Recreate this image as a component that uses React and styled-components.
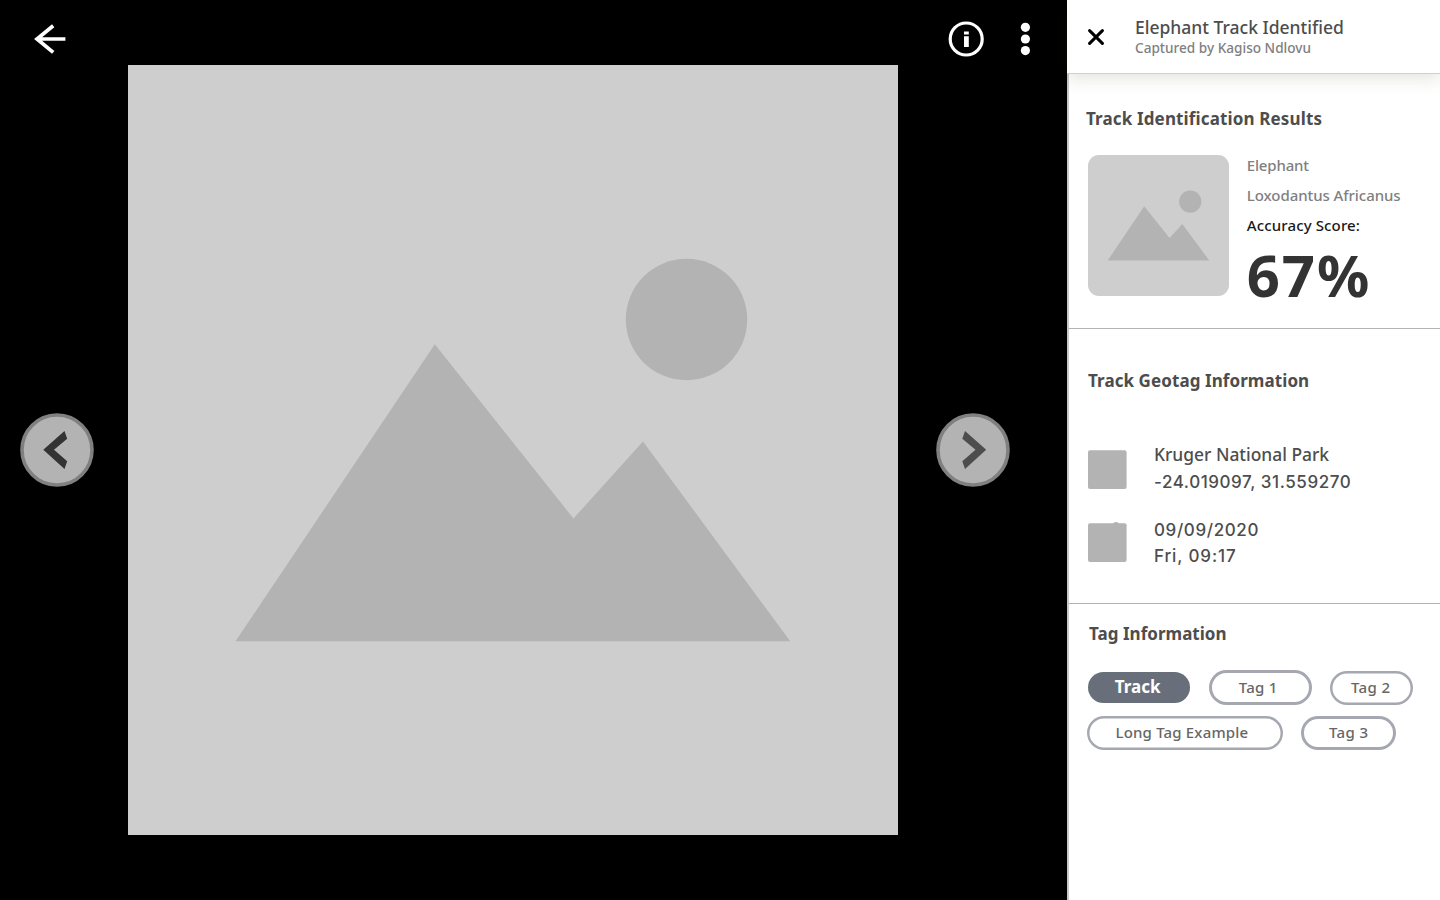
import React from 'react';
import styled, { createGlobalStyle } from 'styled-components';

const GlobalStyle = createGlobalStyle`
  *, *::before, *::after { box-sizing: border-box; }
  body { margin: 0; background: #000; font-family: "Noto Sans", "Open Sans", sans-serif; overflow: hidden; }
  button { padding: 0; border: 0; background: none; font: inherit; color: inherit; }
  svg { display: block; }
`;

const Page = styled.div`
  display: flex;
  width: 1440px;
  height: 900px;
`;

const Viewer = styled.main`
  display: flex;
  flex-direction: column;
  width: 1067px;
  background: #000;
`;

const Toolbar = styled.header`
  display: flex;
  align-items: center;
  height: 65px;
  padding: 14px 35px 0 34px;
`;

const IconButton = styled.button`
  flex: none;
  margin-left: ${(p) => p.$left || '0'};
`;

const Stage = styled.div`
  display: flex;
  align-items: center;
  height: 770px;
  padding-left: 20px;
`;

const Photo = styled.div`
  flex: none;
  width: 770px;
  height: 770px;
  margin: 0 38px 0 34px;
  background: #cecece;
`;

const NavButton = styled.button`
  flex: none;
  width: 74px;
  height: 74px;
`;

const Panel = styled.aside`
  display: flex;
  flex-direction: column;
  width: 373px;
  background: #fff;
`;

const PanelHeader = styled.header`
  position: relative;
  display: flex;
  height: 74px;
  padding: 17px 0 0 21px;
  background: #fff;
  border-bottom: 1px solid #d0d0d0;
  box-shadow: 0 4px 16px rgba(60, 50, 30, 0.14);
`;

const CloseButton = styled.button`
  width: 16px;
  height: 16px;
  margin: 12px 31px 0 0;
`;

const PanelBody = styled.div`
  flex: 1;
  border-left: 2px solid #c9c9c9;
`;

const Section = styled.section`
  height: ${(p) => p.$height};
  padding: ${(p) => p.$pad};
  border-bottom: ${(p) => (p.$last ? '0' : '1px solid #b3b3b3')};
`;

const Title = styled.h1`
  margin: 0;
  font-size: 17.5px;
  line-height: 20px;
  font-weight: 500;
  color: #4d4d4d;
  white-space: nowrap;
`;

const Subtitle = styled.p`
  margin: 0;
  font-size: 13.6px;
  line-height: 22px;
  font-weight: 500;
  color: #808080;
  white-space: nowrap;
`;

const Heading = styled.h2`
  margin: 0 0 0 ${(p) => p.$shift || '0'};
  font-size: 17px;
  line-height: 20px;
  font-weight: 700;
  letter-spacing: ${(p) => p.$tracking};
  color: #4d4d4d;
`;

const Result = styled.div`
  display: flex;
  gap: 18px;
  margin-top: 25.5px;
`;

const Thumb = styled.div`
  flex: none;
  width: 141px;
  height: 141px;
  margin-left: 1.8px;
  border-radius: 11px;
  overflow: hidden;
  background: #cecece;
`;

const Fact = styled.p`
  margin: 0;
  font-size: 15px;
  line-height: 30px;
  height: 30px;
  font-weight: 500;
  letter-spacing: ${(p) => p.$tracking};
  color: ${(p) => (p.$strong ? '#1a1a1a' : '#808080')};
  white-space: nowrap;
`;

const Facts = styled.div`
  margin-top: -5px;
`;

const Score = styled.p`
  margin: 0;
  font-size: 58px;
  line-height: 69px;
  font-weight: 700;
  letter-spacing: 1.9px;
  color: #333;
`;

const GeoRow = styled.div`
  display: flex;
  align-items: flex-start;
  gap: 27px;
  margin-top: ${(p) => p.$top};
`;

const GeoIcon = styled.svg`
  flex: none;
  margin-top: ${(p) => p.$top};
  fill: #b3b3b3;
`;

const GeoLine = styled.p`
  margin: 0;
  font-family: ${(p) => (p.$numeric ? '"Inter", sans-serif' : 'inherit')};
  font-size: ${(p) => (p.$numeric ? '17px' : '17.4px')};
  line-height: ${(p) => p.$line};
  font-weight: 500;
  letter-spacing: ${(p) => p.$tracking};
  color: #4d4d4d;
  white-space: nowrap;
`;

const TagRow = styled.div`
  display: flex;
  align-items: center;
  gap: 18px;
  height: 35px;
  margin-top: ${(p) => p.$top};
`;

const Tag = styled.span`
  flex: none;
  width: ${(p) => p.$width};
  height: ${(p) => p.$height};
  padding-left: ${(p) => p.$indent};
  margin-left: ${(p) => p.$shift || '0'};
  border-radius: 18px;
  font-size: ${(p) => (p.$active ? '17px' : '15px')};
  line-height: ${(p) => p.$line || p.$height};
  font-weight: ${(p) => (p.$active ? 700 : 500)};
  letter-spacing: ${(p) => p.$tracking};
  color: ${(p) => (p.$active ? '#fff' : '#666')};
  background: ${(p) => (p.$active ? '#696e7b' : '#fff')};
  box-shadow: ${(p) => (p.$active ? 'none' : `inset 0 0 0 ${p.$stroke} #a5a8b0`)};
  white-space: nowrap;
`;

const Landscape = ({ size }) => (
  <svg width={size} height={size} viewBox="0 0 770 770" fill="#b3b3b3">
    <path d="M107.5 576.3 306.8 279.3 445.5 453.5 515 376.5 662.3 576.3z" />
    <circle cx="558.5" cy="254.5" r="60.7" />
  </svg>
);

const Chevron = ({ flip }) => (
  <svg width="74" height="74" viewBox="0 0 74 74">
    <circle cx="37" cy="37" r="35" fill="#b3b3b3" stroke="#808080" strokeWidth="3.6" />
    <path
      d="M44.5 18 47.2 25.8 34 36.8 47.2 48.2 44.5 56 23.3 36.8z"
      fill={flip ? '#4d4d4d' : '#333'}
      transform={flip ? 'translate(73.5 0) scale(-1 1)' : undefined}
    />
  </svg>
);

export default function App() {
  return (
    <>
      <GlobalStyle />
      <Page>
        <Viewer>
          <Toolbar>
            <IconButton aria-label="Back">
              <svg width="34" height="34" viewBox="0 0 34 34" fill="none" stroke="#fff" strokeWidth="3.7">
                <path d="M19.2 2.8 3 16 19.2 29.4M3.5 16H31.4" />
              </svg>
            </IconButton>
            <IconButton $left="879px" aria-label="Information">
              <svg width="38" height="38" viewBox="0 0 38 38">
                <circle cx="19.2" cy="18" r="16" fill="none" stroke="#fff" strokeWidth="3.2" />
                <path d="M17 10.5h4.8v3H17zM17 15.2h4.8V26H17z" fill="#fff" />
              </svg>
            </IconButton>
            <IconButton $left="30px" aria-label="More">
              <svg width="18" height="38" viewBox="0 0 18 38" fill="#fff">
                <circle cx="10.4" cy="6.3" r="4.6" />
                <circle cx="10.4" cy="18" r="4.6" />
                <circle cx="10.4" cy="29.6" r="4.6" />
              </svg>
            </IconButton>
          </Toolbar>
          <Stage>
            <NavButton aria-label="Previous"><Chevron /></NavButton>
            <Photo><Landscape size={770} /></Photo>
            <NavButton aria-label="Next"><Chevron flip /></NavButton>
          </Stage>
        </Viewer>

        <Panel>
          <PanelHeader>
            <CloseButton aria-label="Close">
              <svg width="16" height="16" viewBox="0 0 16 16" stroke="#000" strokeWidth="3" strokeLinecap="round">
                <path d="M1.6 1.6 14.4 14.4M14.4 1.6 1.6 14.4" />
              </svg>
            </CloseButton>
            <div>
              <Title>Elephant Track Identified</Title>
              <Subtitle>Captured by Kagiso Ndlovu</Subtitle>
            </div>
          </PanelHeader>

          <PanelBody>
            <Section $height="255px" $pad="35px 0 0 17px">
              <Heading $tracking="0.14px">Track Identification Results</Heading>
              <Result>
                <Thumb><Landscape size={141} /></Thumb>
                <Facts>
                  <Fact $tracking="-0.17px">Elephant</Fact>
                  <Fact $tracking="-0.07px">Loxodantus Africanus</Fact>
                  <Fact $strong $tracking="0.13px">Accuracy Score:</Fact>
                  <Score>67%</Score>
                </Facts>
              </Result>
            </Section>

            <Section $height="275px" $pad="42px 0 0 19px">
              <Heading $tracking="0.08px">Track Geotag Information</Heading>
              <GeoRow $top="49px">
                <GeoIcon $top="10px" width="39" height="39">
                  <rect y="0.3" width="38.6" height="38.6" rx="2" />
                </GeoIcon>
                <div>
                  <GeoLine $line="28px">Kruger National Park</GeoLine>
                  <GeoLine $numeric $line="28px" $tracking="0.57px">-24.019097, 31.559270</GeoLine>
                </div>
              </GeoRow>
              <GeoRow $top="21px">
                <GeoIcon $top="5px" width="39" height="41">
                  <rect y="1.3" width="38.6" height="38.6" rx="2" />
                  <circle cx="28" cy="3" r="3" />
                </GeoIcon>
                <div>
                  <GeoLine $numeric $line="26px" $tracking="0.62px">09/09/2020</GeoLine>
                  <GeoLine $numeric $line="26px" $tracking="0.87px">Fri, 09:17</GeoLine>
                </div>
              </GeoRow>
            </Section>

            <Section $last $pad="20px 0 0 18px">
              <Heading $shift="2px" $tracking="0.03px">Tag Information</Heading>
              <TagRow $top="26px">
                <Tag $active $shift="1.3px" $width="101.5px" $height="31.5px" $indent="26.5px" $line="30.5px">Track</Tag>
                <Tag $shift="0.9px" $width="103.3px" $height="34.5px" $indent="30px" $tracking="0.25px" $stroke="3px">Tag 1</Tag>
                <Tag $width="83px" $height="34px" $indent="21px" $line="32.5px" $tracking="0.37px" $stroke="2.5px">Tag 2</Tag>
              </TagRow>
              <TagRow $top="10.5px">
                <Tag $width="195.5px" $height="33.5px" $indent="28.5px" $tracking="0.17px" $stroke="2.5px">Long Tag Example</Tag>
                <Tag $width="95.5px" $height="34.5px" $indent="28.5px" $line="33px" $tracking="0.37px" $stroke="3px">Tag 3</Tag>
              </TagRow>
            </Section>
          </PanelBody>
        </Panel>
      </Page>
    </>
  );
}
